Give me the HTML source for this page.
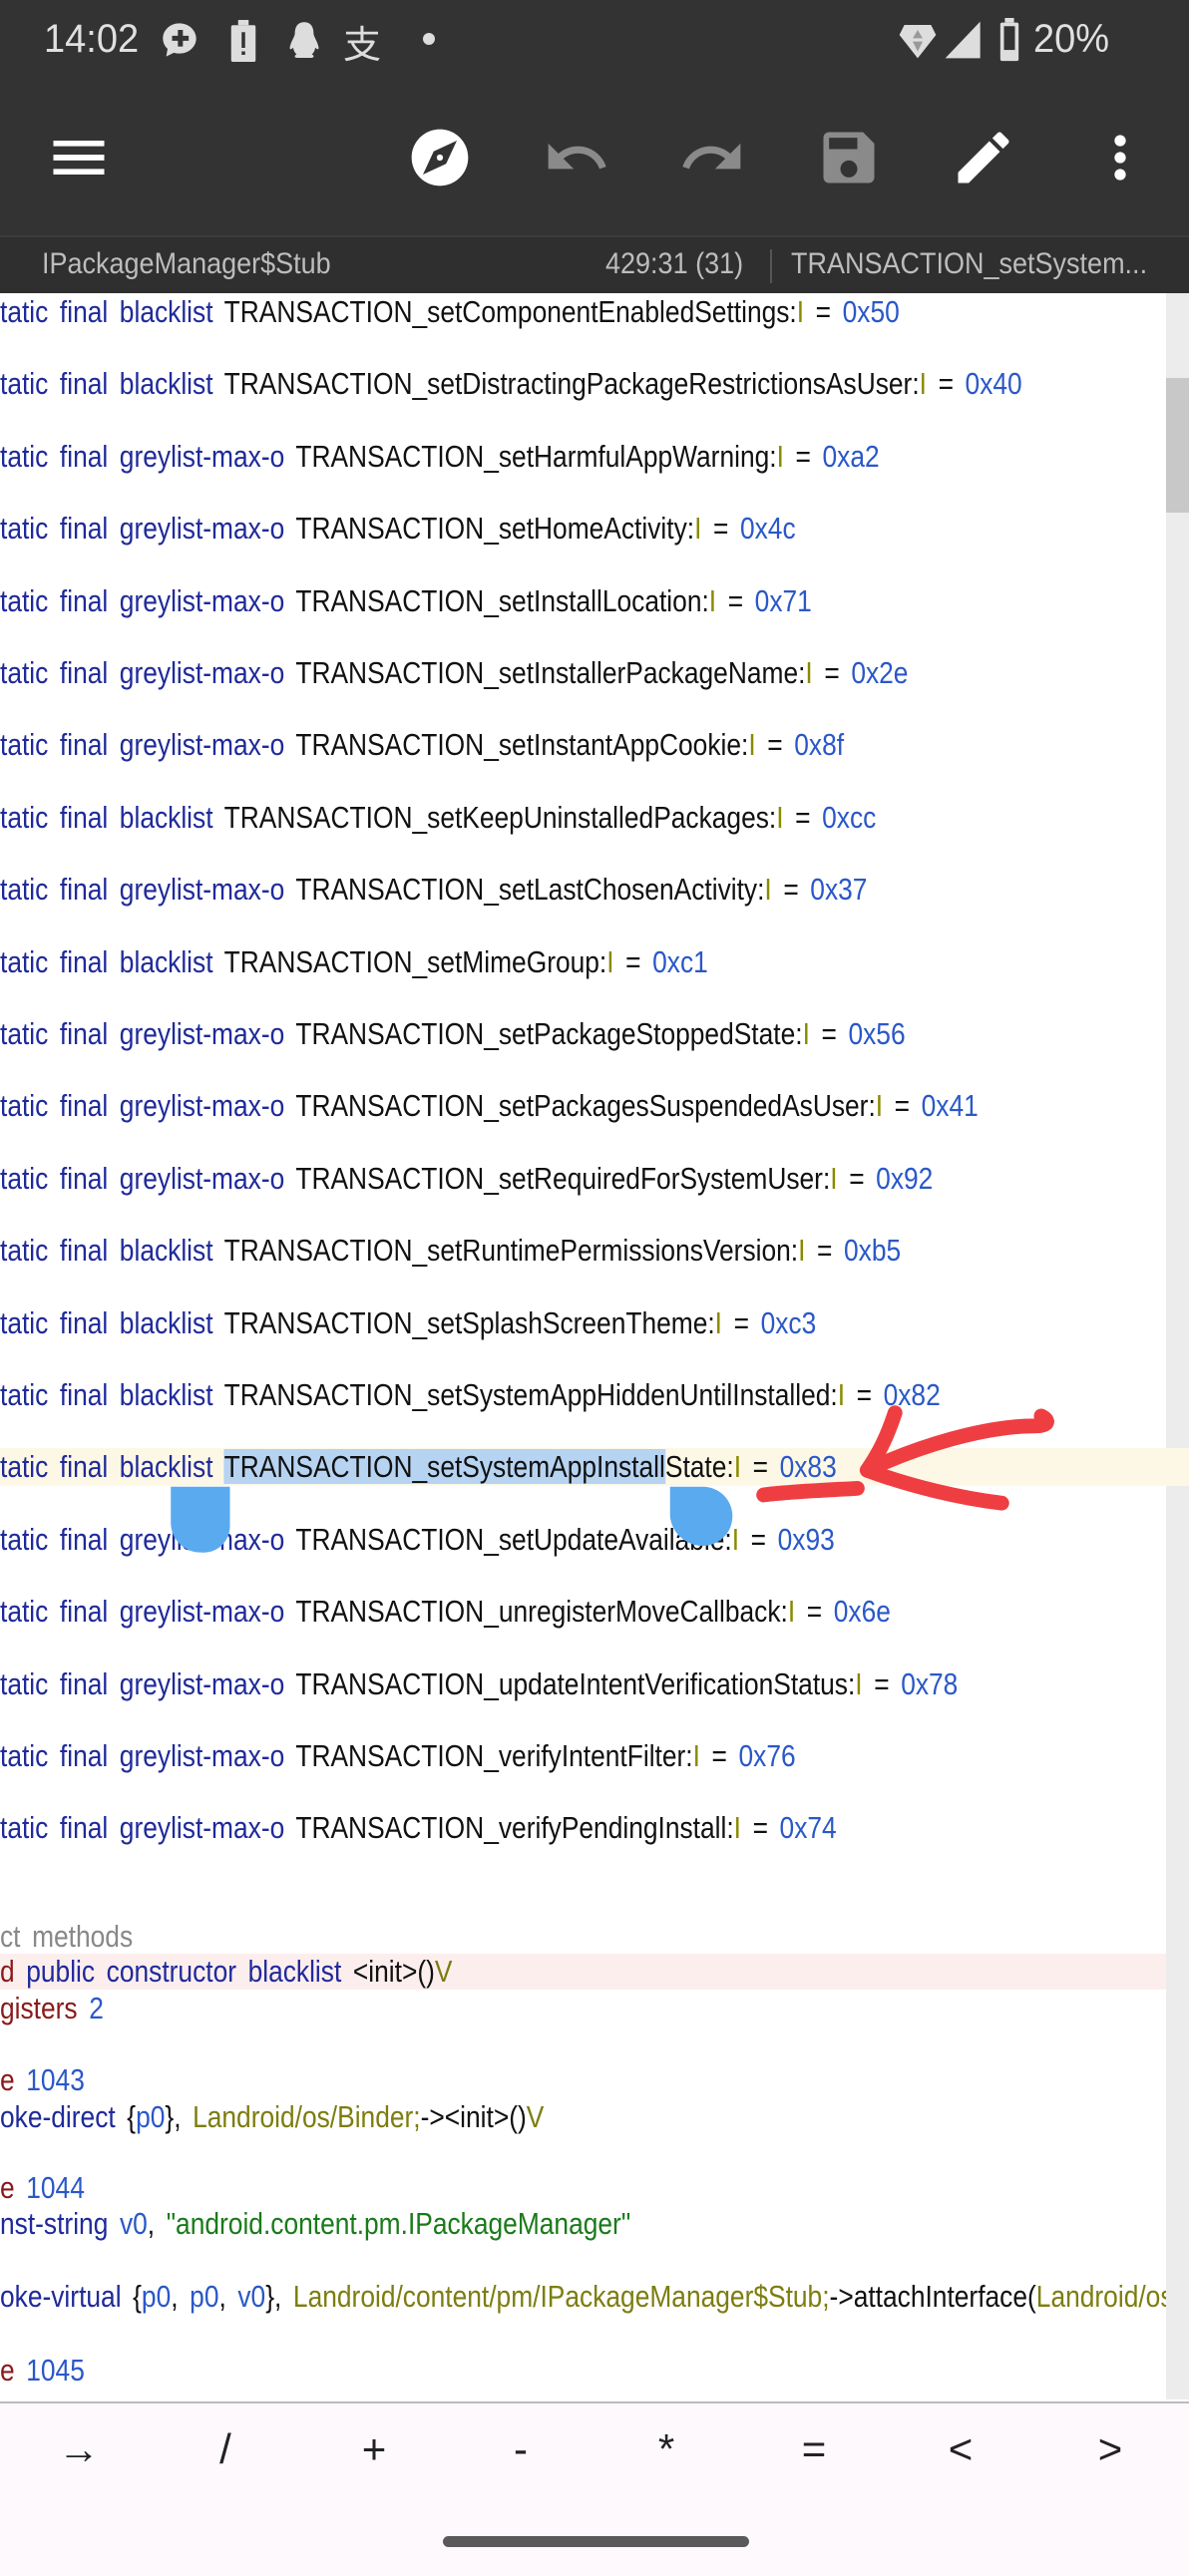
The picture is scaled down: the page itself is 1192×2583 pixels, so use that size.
<!DOCTYPE html>
<html><head><meta charset="utf-8">
<style>
*{margin:0;padding:0;box-sizing:border-box}
body{width:1192px;height:2583px;position:relative;overflow:hidden;background:#fff;font-family:"Liberation Sans","Noto Sans CJK SC",sans-serif}
.top{position:absolute;left:0;top:0;width:1192px;height:236px;background:#333}
.sub{position:absolute;left:0;top:236px;width:1192px;height:58px;background:#2f2f2f;border-top:2px solid #3c3c3c;color:#bdbdbd;font-size:30px;overflow:hidden}
.sub span{position:absolute;top:10px;display:inline-block;transform:scaleX(.9);transform-origin:0 50%;white-space:nowrap}
.ln{position:absolute;left:0;height:36px;line-height:36px;font-size:31px;white-space:nowrap;width:1169px;overflow:hidden}
.ln>span.t{display:inline-block;transform:scaleX(.85);transform-origin:0 50%;word-spacing:5px}
.k{color:#1f2a9a}.n{color:#111}.ty{color:#8a8a00}.h{color:#2a58c8}.r{color:#8b1a1a}.s{color:#1a7a1a}.o{color:#7d7d10}.g{color:#888}
.sel{background:#b6d3f2}
.ic{position:absolute}
.sym{position:absolute;top:2432px;font-size:42px;color:#222;width:60px;text-align:center;margin-left:-30px}
</style></head><body>
<div class="top"></div>
<div style="position:absolute;left:44px;top:17px;color:#e0e0e0;font-size:40px;transform:scaleX(.95);transform-origin:0 0">14:02</div>
<svg class="ic" style="left:160px;top:20px" width="40" height="40" viewBox="0 0 24 24"><path fill="#ddd" d="M12 2C6.5 2 2 6 2 11c0 2.5 1 4.7 2.8 6.3L4 22l4.6-2.3c1.1.3 2.2.5 3.4.5 5.5 0 10-4 10-9S17.5 2 12 2z"/><path fill="#333" d="M11 6h3v3.5h3.5v3H14V16h-3v-3.5H7.5v-3H11z"/></svg>
<svg class="ic" style="left:228px;top:20px" width="32" height="42" viewBox="0 0 16 24"><rect x="5" y="0" width="6" height="3" fill="#ddd"/><rect x="1" y="3" width="14" height="21" rx="1" fill="#ddd"/><rect x="7" y="7" width="2" height="9" fill="#333"/><rect x="7" y="18" width="2" height="2" fill="#333"/></svg>
<svg class="ic" style="left:288px;top:20px" width="34" height="42" viewBox="0 0 20 24"><path fill="#ddd" d="M10 1C6 1 4.5 4 4.5 7.5c0 2-2.5 5-3 8.5 0 1.5 1 1 2 0 .3 2 1 3 2 4-1.5.5-1.5 2 .5 2h8c2 0 2-1.5.5-2 1-1 1.7-2 2-4 1 1 2 1.5 2 0-.5-3.5-3-6.5-3-8.5C15.5 4 14 1 10 1z"/></svg>
<div style="position:absolute;left:344px;top:14px;color:#ddd;font-size:38px;font-family:'Noto Sans CJK SC',sans-serif">支</div>
<div style="position:absolute;left:424px;top:33px;width:12px;height:12px;border-radius:50%;background:#ddd"></div>
<svg class="ic" style="left:900px;top:20px" width="40" height="40" viewBox="0 0 24 24"><path fill="#ddd" d="M4 3h16l3 6-11 14L1 9z"/><path fill="#999" d="M12 6l3 5h-6z M9 13h6l-3 6z"/></svg>
<svg class="ic" style="left:946px;top:20px" width="40" height="40" viewBox="0 0 24 24"><path fill="#ddd" d="M22 1v22H1z"/></svg>
<svg class="ic" style="left:1000px;top:18px" width="24" height="44" viewBox="0 0 12 24"><rect x="3.5" y="0" width="5" height="2.5" fill="#ddd"/><rect x="1" y="2.5" width="10" height="21" rx="1" fill="#ddd"/><rect x="3" y="4.5" width="6" height="13" fill="#333"/></svg>
<div style="position:absolute;left:1036px;top:17px;color:#e0e0e0;font-size:40px;transform:scaleX(.95);transform-origin:0 0">20%</div>

<svg class="ic" style="left:45px;top:124px" width="68" height="68" viewBox="0 0 24 24"><path fill="#fff" d="M3 18h18v-2H3v2zm0-5h18v-2H3v2zm0-7v2h18V6H3z"/></svg>
<svg class="ic" style="left:407px;top:124px" width="68" height="68" viewBox="0 0 24 24"><path fill="#fff" d="M12 10.9c-.61 0-1.1.49-1.1 1.1s.49 1.1 1.1 1.1c.61 0 1.1-.49 1.1-1.1s-.49-1.1-1.1-1.1zM12 2C6.48 2 2 6.48 2 12s4.48 10 10 10 10-4.48 10-10S17.52 2 12 2zm2.19 12.19L6 18l3.81-8.19L18 6l-3.81 8.19z"/></svg>
<svg class="ic" style="left:544px;top:124px" width="68" height="68" viewBox="0 0 24 24"><path fill="#8a8a8a" d="M12.5 8c-2.65 0-5.05.99-6.9 2.6L2 7v9h9l-3.62-3.62c1.39-1.16 3.16-1.88 5.12-1.88 3.54 0 6.55 2.31 7.6 5.5l2.37-.78C21.08 11.03 17.15 8 12.5 8z"/></svg>
<svg class="ic" style="left:680px;top:124px" width="68" height="68" viewBox="0 0 24 24"><path fill="#8a8a8a" d="M18.4 10.6C16.55 8.99 14.15 8 11.5 8c-4.65 0-8.58 3.03-9.96 7.22L3.9 16c1.05-3.19 4.05-5.5 7.6-5.5 1.95 0 3.73.72 5.12 1.88L13 16h9V7l-3.6 3.6z"/></svg>
<svg class="ic" style="left:817px;top:124px" width="68" height="68" viewBox="0 0 24 24"><path fill="#8a8a8a" d="M17 3H5c-1.11 0-2 .9-2 2v14c0 1.1.89 2 2 2h14c1.1 0 2-.9 2-2V7l-4-4zm-5 16c-1.66 0-3-1.34-3-3s1.34-3 3-3 3 1.34 3 3-1.34 3-3 3zm3-10H5V5h10v4z"/></svg>
<svg class="ic" style="left:952px;top:124px" width="68" height="68" viewBox="0 0 24 24"><path fill="#fff" d="M3 17.25V21h3.75L17.81 9.94l-3.75-3.75L3 17.25zM20.71 7.04c.39-.39.39-1.02 0-1.41l-2.34-2.34c-.39-.39-1.02-.39-1.41 0l-1.83 1.83 3.75 3.75 1.83-1.83z"/></svg>
<svg class="ic" style="left:1089px;top:124px" width="68" height="68" viewBox="0 0 24 24"><path fill="#fff" d="M12 8c1.1 0 2-.9 2-2s-.9-2-2-2-2 .9-2 2 .9 2 2 2zm0 2c-1.1 0-2 .9-2 2s.9 2 2 2 2-.9 2-2-.9-2-2-2zm0 6c-1.1 0-2 .9-2 2s.9 2 2 2 2-.9 2-2-.9-2-2-2z"/></svg>

<div class="sub"><span style="left:42px">IPackageManager$Stub</span><span style="left:607px">429:31 (31)</span><div style="position:absolute;left:772px;top:12px;width:2px;height:34px;background:#555"></div><span style="left:793px">TRANSACTION_setSystem...</span></div>

<div style="position:absolute;left:1169px;top:294px;width:23px;height:2112px;background:#ececec"></div>
<div style="position:absolute;left:1169px;top:379px;width:23px;height:135px;background:#c8c8c8"></div>

<div style="position:absolute;left:0;top:1452px;width:1192px;height:38px;background:#fdf8e6"></div>
<div style="position:absolute;left:0;top:1959px;width:1169px;height:36px;background:#fdeeee"></div>

<div class="ln" style="top:295px"><span class="t"><span class="k">tatic final blacklist</span> <span class="n">TRANSACTION_setComponentEnabledSettings:</span><span class="ty">I</span> <span class="n">=</span> <span class="h">0x50</span></span></div>
<div class="ln" style="top:367px"><span class="t"><span class="k">tatic final blacklist</span> <span class="n">TRANSACTION_setDistractingPackageRestrictionsAsUser:</span><span class="ty">I</span> <span class="n">=</span> <span class="h">0x40</span></span></div>
<div class="ln" style="top:440px"><span class="t"><span class="k">tatic final greylist-max-o</span> <span class="n">TRANSACTION_setHarmfulAppWarning:</span><span class="ty">I</span> <span class="n">=</span> <span class="h">0xa2</span></span></div>
<div class="ln" style="top:512px"><span class="t"><span class="k">tatic final greylist-max-o</span> <span class="n">TRANSACTION_setHomeActivity:</span><span class="ty">I</span> <span class="n">=</span> <span class="h">0x4c</span></span></div>
<div class="ln" style="top:585px"><span class="t"><span class="k">tatic final greylist-max-o</span> <span class="n">TRANSACTION_setInstallLocation:</span><span class="ty">I</span> <span class="n">=</span> <span class="h">0x71</span></span></div>
<div class="ln" style="top:657px"><span class="t"><span class="k">tatic final greylist-max-o</span> <span class="n">TRANSACTION_setInstallerPackageName:</span><span class="ty">I</span> <span class="n">=</span> <span class="h">0x2e</span></span></div>
<div class="ln" style="top:729px"><span class="t"><span class="k">tatic final greylist-max-o</span> <span class="n">TRANSACTION_setInstantAppCookie:</span><span class="ty">I</span> <span class="n">=</span> <span class="h">0x8f</span></span></div>
<div class="ln" style="top:802px"><span class="t"><span class="k">tatic final blacklist</span> <span class="n">TRANSACTION_setKeepUninstalledPackages:</span><span class="ty">I</span> <span class="n">=</span> <span class="h">0xcc</span></span></div>
<div class="ln" style="top:874px"><span class="t"><span class="k">tatic final greylist-max-o</span> <span class="n">TRANSACTION_setLastChosenActivity:</span><span class="ty">I</span> <span class="n">=</span> <span class="h">0x37</span></span></div>
<div class="ln" style="top:947px"><span class="t"><span class="k">tatic final blacklist</span> <span class="n">TRANSACTION_setMimeGroup:</span><span class="ty">I</span> <span class="n">=</span> <span class="h">0xc1</span></span></div>
<div class="ln" style="top:1019px"><span class="t"><span class="k">tatic final greylist-max-o</span> <span class="n">TRANSACTION_setPackageStoppedState:</span><span class="ty">I</span> <span class="n">=</span> <span class="h">0x56</span></span></div>
<div class="ln" style="top:1091px"><span class="t"><span class="k">tatic final greylist-max-o</span> <span class="n">TRANSACTION_setPackagesSuspendedAsUser:</span><span class="ty">I</span> <span class="n">=</span> <span class="h">0x41</span></span></div>
<div class="ln" style="top:1164px"><span class="t"><span class="k">tatic final greylist-max-o</span> <span class="n">TRANSACTION_setRequiredForSystemUser:</span><span class="ty">I</span> <span class="n">=</span> <span class="h">0x92</span></span></div>
<div class="ln" style="top:1236px"><span class="t"><span class="k">tatic final blacklist</span> <span class="n">TRANSACTION_setRuntimePermissionsVersion:</span><span class="ty">I</span> <span class="n">=</span> <span class="h">0xb5</span></span></div>
<div class="ln" style="top:1309px"><span class="t"><span class="k">tatic final blacklist</span> <span class="n">TRANSACTION_setSplashScreenTheme:</span><span class="ty">I</span> <span class="n">=</span> <span class="h">0xc3</span></span></div>
<div class="ln" style="top:1381px"><span class="t"><span class="k">tatic final blacklist</span> <span class="n">TRANSACTION_setSystemAppHiddenUntilInstalled:</span><span class="ty">I</span> <span class="n">=</span> <span class="h">0x82</span></span></div>
<div class="ln" style="top:1453px"><span class="t"><span class="k">tatic final blacklist</span> <span class="n"><span class="sel">TRANSACTION_setSystemAppInstall</span>State:</span><span class="ty">I</span> <span class="n">=</span> <span class="h">0x83</span></span></div>
<div class="ln" style="top:1526px"><span class="t"><span class="k">tatic final greylist-max-o</span> <span class="n">TRANSACTION_setUpdateAvailable:</span><span class="ty">I</span> <span class="n">=</span> <span class="h">0x93</span></span></div>
<div class="ln" style="top:1598px"><span class="t"><span class="k">tatic final greylist-max-o</span> <span class="n">TRANSACTION_unregisterMoveCallback:</span><span class="ty">I</span> <span class="n">=</span> <span class="h">0x6e</span></span></div>
<div class="ln" style="top:1671px"><span class="t"><span class="k">tatic final greylist-max-o</span> <span class="n">TRANSACTION_updateIntentVerificationStatus:</span><span class="ty">I</span> <span class="n">=</span> <span class="h">0x78</span></span></div>
<div class="ln" style="top:1743px"><span class="t"><span class="k">tatic final greylist-max-o</span> <span class="n">TRANSACTION_verifyIntentFilter:</span><span class="ty">I</span> <span class="n">=</span> <span class="h">0x76</span></span></div>
<div class="ln" style="top:1815px"><span class="t"><span class="k">tatic final greylist-max-o</span> <span class="n">TRANSACTION_verifyPendingInstall:</span><span class="ty">I</span> <span class="n">=</span> <span class="h">0x74</span></span></div>

<div class="ln" style="top:1924px"><span class="t g">ct methods</span></div>
<div class="ln" style="top:1959px"><span class="t"><span class="r">d</span> <span class="k">public constructor blacklist</span> <span class="n">&lt;init&gt;()</span><span class="o">V</span></span></div>
<div class="ln" style="top:1996px"><span class="t"><span class="r">gisters</span> <span class="h">2</span></span></div>
<div class="ln" style="top:2068px"><span class="t"><span class="r">e</span> <span class="h">1043</span></span></div>
<div class="ln" style="top:2105px"><span class="t"><span class="k">oke-direct</span> <span class="n">{</span><span class="h">p0</span><span class="n">},</span> <span class="o">Landroid/os/Binder;</span><span class="n">-&gt;&lt;init&gt;()</span><span class="o">V</span></span></div>
<div class="ln" style="top:2176px"><span class="t"><span class="r">e</span> <span class="h">1044</span></span></div>
<div class="ln" style="top:2212px"><span class="t"><span class="k">nst-string</span> <span class="h">v0</span><span class="n">,</span> <span class="s">"android.content.pm.IPackageManager"</span></span></div>
<div class="ln" style="top:2285px"><span class="t"><span class="k">oke-virtual</span> <span class="n">{</span><span class="h">p0</span><span class="n">,</span> <span class="h">p0</span><span class="n">,</span> <span class="h">v0</span><span class="n">},</span> <span class="o">Landroid/content/pm/IPackageManager$Stub;</span><span class="n">-&gt;attachInterface(</span><span class="o">Landroid/os/IInterface;</span></span></div>
<div class="ln" style="top:2359px"><span class="t"><span class="r">e</span> <span class="h">1045</span></span></div>

<div style="position:absolute;left:0;top:2408px;width:1192px;height:175px;background:#fdf9fc;border-top:2px solid #bbb"></div>
<div class="sym" style="left:79px">→</div>
<div class="sym" style="left:226px">/</div>
<div class="sym" style="left:375px">+</div>
<div class="sym" style="left:522px">-</div>
<div class="sym" style="left:668px">*</div>
<div class="sym" style="left:816px">=</div>
<div class="sym" style="left:963px">&lt;</div>
<div class="sym" style="left:1113px">&gt;</div>
<div style="position:absolute;left:444px;top:2543px;width:307px;height:11px;border-radius:6px;background:#5a5a5a"></div>

<svg style="position:absolute;left:0;top:0" width="1192" height="2583" viewBox="0 0 724 1568">
<path fill="#5aaaf0" d="M104 905h36v24a16 16 0 0 1-18 16a18 18 0 0 1-18-18z"/>
<path fill="#5aaaf0" d="M408 905h20a18 18 0 0 1 18 18a18 18 0 0 1-18 18a20 20 0 0 1-20-18z"/>
<path fill="none" stroke="#ef3e42" stroke-width="9" stroke-linecap="round" d="M465 910 C480 908 505 907 522 906"/>
<path fill="none" stroke="#ef3e42" stroke-width="9" stroke-linecap="round" stroke-linejoin="round" d="M545 860 C540 875 535 885 528 895 C560 880 600 868 630 868 C638 868 640 865 634 862 M528 895 C555 905 585 912 610 915"/>
</svg>
</body></html>
